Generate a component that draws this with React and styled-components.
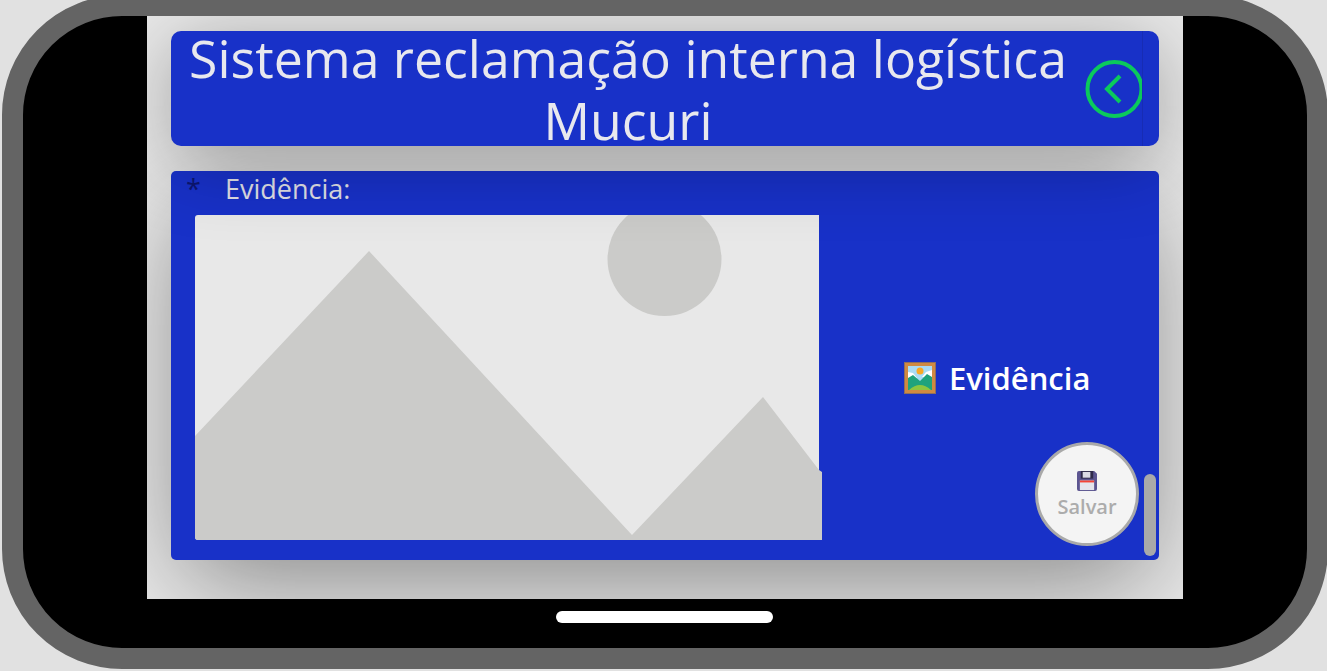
import React from "react";
import styled, { createGlobalStyle } from "styled-components";

const Global = createGlobalStyle`
  html, body { margin: 0; padding: 0; height: 100%; overflow: hidden; background: #e1e1e1; }
  #root { height: 100%; }
`;

const Device = styled.div`
  box-sizing: border-box;
  width: 1326px;
  height: 674px;
  margin: -5px 0 0 2px;
  border: 21px solid #646464;
  border-radius: 120px;
  background: #000;
  display: flex;
  flex-direction: column;
  align-items: center;
  overflow: hidden;
`;

const Screen = styled.main`
  box-sizing: border-box;
  flex: none;
  width: 1036px;
  height: 583px;
  padding: 15px 24px 0 24px;
  background: #e9e9e9;
  display: flex;
  flex-direction: column;
  gap: 25px;
  overflow: hidden;
  font-family: "Open Sans", sans-serif;
`;

const HomeBar = styled.div`
  flex: none;
  width: 217px;
  height: 12px;
  margin: 12px 1px 0 0;
  border-radius: 6px;
  background: #fff;
`;

const Header = styled.header`
  position: relative;
  z-index: 2;
  flex: none;
  height: 115px;
  border-radius: 10px;
  background: #1831c8;
  box-shadow: 0 12px 80px rgba(0, 0, 0, 0.32);
  display: flex;
  overflow: hidden;
`;

const Title = styled.h1`
  flex: none;
  width: 914px;
  margin: -4px 0 0;
  font-size: 51.75px;
  font-weight: 400;
  line-height: 62px;
  text-align: center;
  color: #e8e8ee;
`;

const BackButton = styled.button`
  flex: none;
  width: 57px;
  height: 100%;
  padding: 0;
  border: 0;
  background: none;
  display: flex;
  align-items: center;
  overflow: hidden;
`;

const BackSvg = styled.svg`
  flex: none;
  width: 60px;
  height: 60px;
`;

const HeaderRail = styled.div`
  flex: 1;
  border-left: 1px solid #172cb4;
`;

const Card = styled.section`
  position: relative;
  flex: none;
  height: 389px;
  border-radius: 5px;
  background: #1831c8;
  box-shadow: 0 30px 100px -10px rgba(0, 0, 0, 0.43);
`;

const LabelRow = styled.div`
  display: flex;
  height: 44px;
  color: #e0e0e6;
  font-size: 27px;
  line-height: 36px;
`;

const Asterisk = styled.span`
  width: 54px;
  padding-left: 15px;
  box-sizing: border-box;
  color: #0c1670;
`;

const Body = styled.div`
  display: flex;
  padding-left: 24px;
`;

const Placeholder = styled.svg`
  flex: none;
  width: 627px;
  height: 325px;
  display: block;
  border-radius: 3px 0 0 3px;
`;

const FileLabel = styled.div`
  flex: none;
  display: flex;
  align-items: center;
  gap: 13px;
  height: 325px;
  margin-left: 82px;
  color: #fff;
  font-size: 31px;
  font-weight: 600;
`;

const SaveButton = styled.button`
  position: absolute;
  right: 20px;
  bottom: 14px;
  box-sizing: border-box;
  width: 104px;
  height: 104px;
  padding: 3px 0 0;
  border: 3px solid #a9a9a9;
  border-radius: 50%;
  background: #f4f4f4;
  color: #acacac;
  font-family: inherit;
  font-size: 20px;
  font-weight: 600;
  line-height: 26px;
  display: flex;
  flex-direction: column;
  align-items: center;
  justify-content: center;
  gap: 3px;
`;

const ScrollThumb = styled.div`
  position: absolute;
  right: 3px;
  bottom: 4px;
  width: 12px;
  height: 82px;
  border-radius: 6px;
  background: #a9a9a9;
`;

const BackIcon = () => (
  <BackSvg viewBox="0 0 60 60" fill="none">
    <circle cx="29.5" cy="30" r="27" stroke="#0bc95c" strokeWidth="4" />
    <path d="M35 17 L22 30 L35 43" stroke="#0bc95c" strokeWidth="4" />
  </BackSvg>
);

const PictureIcon = () => (
  <svg width="32" height="32" viewBox="0 0 32 32">
    <rect width="32" height="32" fill="#8f6f5c" />
    <rect x="1" y="1" width="30" height="30" fill="#cf8a42" />
    <rect x="4" y="4" width="24" height="24" fill="#a9dcf5" />
    <circle cx="16" cy="9" r="3.5" fill="#f9a825" />
    <path d="M4 10 L9 11 L13 16 L4 16Z" fill="#fff" />
    <path d="M28 8 L22 10 L18 15 L28 15Z" fill="#fff" />
    <path d="M4 16 L9 13 L16 19 L23 12 L28 15 L28 28 L4 28Z" fill="#1fa37c" />
    <path d="M5 28 Q16 18 27 28Z" fill="#8dc63f" />
  </svg>
);

const SaveIcon = () => (
  <svg width="20" height="20" viewBox="0 0 21 21">
    <path d="M2 0 H18 L21 3 V19 Q21 21 19 21 H2 Q0 21 0 19 V2 Q0 0 2 0Z" fill="#5c5590" />
    <rect x="4" y="0" width="13" height="8" fill="#2f2a4a" />
    <rect x="6" y="1" width="8" height="6" fill="#dcdbe4" />
    <rect x="3" y="10" width="15" height="10" fill="#e4e4ec" />
    <rect x="3" y="10" width="15" height="2" fill="#f44336" />
  </svg>
);

export default function App() {
  return (
    <>
      <Global />
      <Device>
        <Screen>
          <Header>
            <Title>Sistema reclamação interna logística Mucuri</Title>
            <BackButton aria-label="Voltar"><BackIcon /></BackButton>
            <HeaderRail />
          </Header>
          <Card>
            <LabelRow>
              <Asterisk>*</Asterisk>
              <span>Evidência:</span>
            </LabelRow>
            <Body>
              <Placeholder viewBox="0 0 627 325">
                <rect width="624" height="325" fill="#e8e8e8" />
                <circle cx="469.5" cy="44" r="57" fill="#cbcbc9" />
                <path d="M0 221 L174 36 L437 320 L568 182 L624 255 L627 257 L627 325 L0 325Z" fill="#cbcbc9" />
              </Placeholder>
              <FileLabel><PictureIcon />Evidência</FileLabel>
            </Body>
            <SaveButton><SaveIcon />Salvar</SaveButton>
            <ScrollThumb />
          </Card>
        </Screen>
        <HomeBar />
      </Device>
    </>
  );
}
